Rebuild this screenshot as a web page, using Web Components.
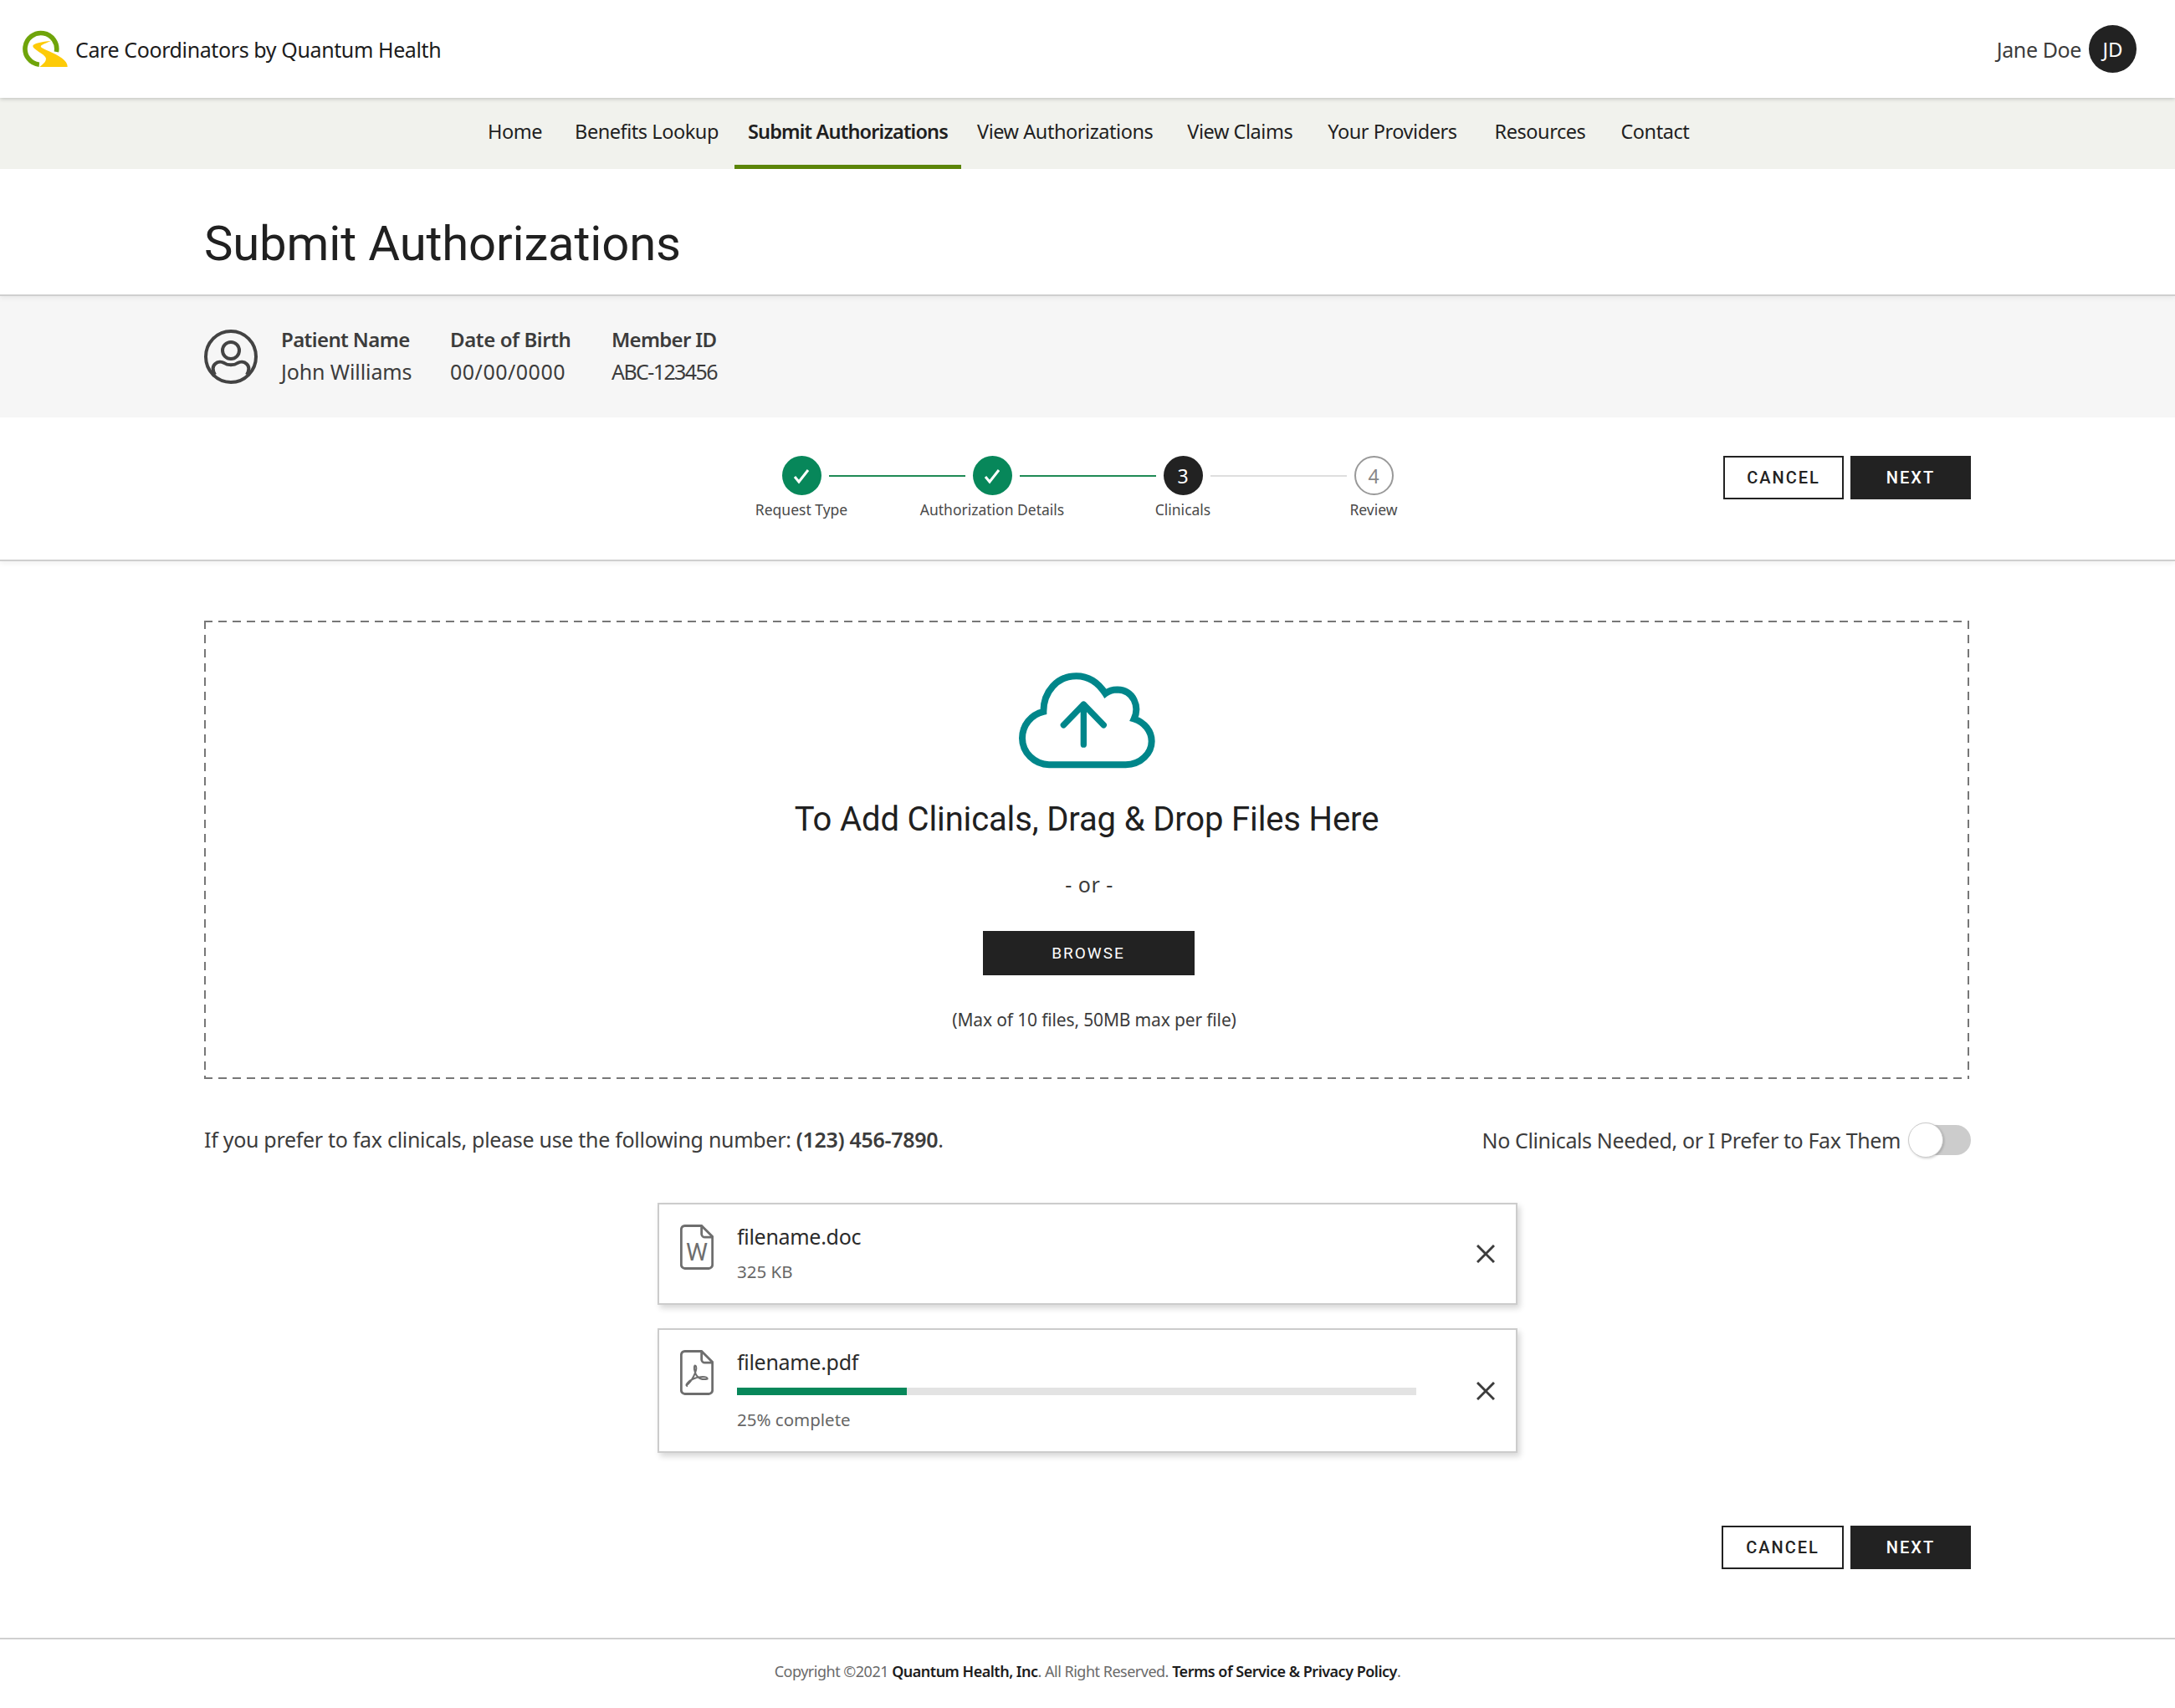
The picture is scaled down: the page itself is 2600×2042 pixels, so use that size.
<!DOCTYPE html>
<html lang="en">
<head>
<meta charset="utf-8">
<title>Submit Authorizations</title>
<style>
  html, body { margin: 0; background: #fff; }
  body { font-family: "Noto Sans", "Open Sans", sans-serif; color: #222; width: 2600px; }
</style>
</head>
<body>
<app-header></app-header>
<app-nav>
  <nav-item>Home</nav-item>
  <nav-item style="margin-left:7px">Benefits Lookup</nav-item>
  <nav-item style="margin-left:3px" active>Submit Authorizations</nav-item>
  <nav-item style="margin-left:3px">View Authorizations</nav-item>
  <nav-item style="margin-left:9px">View Claims</nav-item>
  <nav-item style="margin-left:10px">Your Providers</nav-item>
  <nav-item style="margin-left:13px">Resources</nav-item>
  <nav-item style="margin-left:10px">Contact</nav-item>
</app-nav>
<page-title>Submit Authorizations</page-title>
<patient-band></patient-band>
<step-bar></step-bar>
<main-area>
  <drop-zone></drop-zone>
  <fax-row></fax-row>
  <file-card name="filename.doc" note="325 KB" kind="doc"></file-card>
  <file-card name="filename.pdf" note="25% complete" kind="pdf" progress="25"></file-card>
  <form-actions class="bottom" wide></form-actions>
</main-area>
<app-footer></app-footer>

<script>
// Fuente del cuerpo: la del diseño no está instalada, se ajusta con letter-spacing
const BODY_FONT = '"Noto Sans", "Open Sans", sans-serif';

// Clase base: monta el template en el shadow root
class ShadowElement extends HTMLElement {
  constructor() {
    super();
    this.attachShadow({ mode: "open" });
  }

  connectedCallback() {
    this.shadowRoot.innerHTML = this.render();
  }
}

class AppHeader extends ShadowElement {
  render() {
    return `
    <style>
      :host { display: flex; align-items: center; height: 117px; padding: 0 46px 0 25px; background: #fff;
        position: relative; z-index: 2; box-shadow: 0 1px 5px rgba(0,0,0,.22); font-family: ${BODY_FONT}; }
      .brand { margin-left: 7px; font-size: 25px; letter-spacing: -.39px; color: #1c1c1c; }
      .user { margin-left: auto; font-size: 25px; letter-spacing: -.4px; color: #3c3c3c; }
      .avatar { width: 57px; height: 57px; margin-left: 9px; border-radius: 50%; background: #222; color: #fff;
        display: flex; align-items: center; justify-content: center; font-size: 24px; }
    </style>
    <svg width="58" height="45" viewBox="75 80 175 135">
      <path d="M203 158A57 57 0 1 0 141 204" fill="none" stroke="#6fa40a" stroke-width="17"/>
      <path d="M185 118C150 122 118 128 118 137C118 150 160 165 165 180C168 195 150 205 143 212L243 212C245 190 210 170 175 155C155 147 140 140 150 134C160 128 175 122 185 118Z" fill="#fdcb08"/>
    </svg>
    <span class="brand">Care Coordinators by Quantum Health</span>
    <span class="user">Jane Doe</span>
    <span class="avatar">JD</span>`;
  }
}

class AppNav extends ShadowElement {
  render() {
    return `
    <style>
      :host { display: flex; height: 85px; padding-left: 567px; background: #f1f2ed; font-family: ${BODY_FONT}; }
    </style>
    <slot></slot>`;
  }
}

class NavItem extends ShadowElement {
  render() {
    return `
    <style>
      :host { display: flex; align-items: center; box-sizing: border-box; height: 85px; padding: 0 16px 5px;
        font-size: 23.5px; letter-spacing: -.45px; color: #1f1f1f; white-space: nowrap; }
      :host([active]) { font-weight: 600; letter-spacing: -.83px; border-bottom: 5px solid #5b8507; padding-bottom: 0; }
    </style>
    <slot></slot>`;
  }
}

class PageTitle extends ShadowElement {
  render() {
    return `
    <style>
      :host { display: block; box-sizing: border-box; height: 152px; padding: 54px 0 0 244px; background: #fff;
        border-bottom: 2px solid #cfcfcf; box-shadow: 0 3px 6px rgba(0,0,0,.05); position: relative;
        font: 400 58px/70px Roboto, sans-serif; letter-spacing: -.15px; color: #202020; }
    </style>
    <slot></slot>`;
  }
}

class PatientBand extends ShadowElement {
  render() {
    return `
    <style>
      :host { display: grid; grid-template-columns: 92px 202px 193px auto; justify-content: start; box-sizing: border-box;
        height: 145px; padding: 34px 0 0 244px; background: #f6f6f6; font-family: ${BODY_FONT}; font-size: 25px; line-height: 36px; color: #3c3c3c; }
      svg { margin-top: 6px; }
      b { display: block; font-size: 24px; font-weight: 600; margin-bottom: 2px; }
    </style>
    <svg width="64" height="65" viewBox="0 0 64 65" fill="none" stroke="#434343" stroke-width="4">
      <ellipse cx="32" cy="32.5" rx="30" ry="30.5"/>
      <circle cx="32" cy="25" r="10"/>
      <path d="M13 54C6 42 17 36 24 40C28 43 36 43 40 40C47 36 58 42 51 54"/>
    </svg>
    <div><b style="letter-spacing:-.6px">Patient Name</b><span style="letter-spacing:-.1px">John Williams</span></div>
    <div><b style="letter-spacing:-.4px">Date of Birth</b><span style="letter-spacing:.5px">00/00/0000</span></div>
    <div><b style="letter-spacing:-.7px">Member ID</b><span style="letter-spacing:-1.6px">ABC-123456</span></div>`;
  }
}

class StepBar extends ShadowElement {
  render() {
    return `
    <style>
      :host { display: flex; box-sizing: border-box; height: 172px; padding: 46px 244px 0 844px; background: #fff;
        border-bottom: 2px solid #cfcfcf; box-shadow: 0 3px 6px rgba(0,0,0,.05); position: relative; }
      .steps { display: grid; grid-template-columns: repeat(4, 228px); }
      form-actions { margin-left: auto; }
    </style>
    <div class="steps">
      <step-item state="done" right="on">Request Type</step-item>
      <step-item state="done" left="on" right="on">Authorization Details</step-item>
      <step-item state="current" value="3" left="on" right="off">Clinicals</step-item>
      <step-item state="todo" value="4" left="off">Review</step-item>
    </div>
    <form-actions></form-actions>`;
  }
}

class StepItem extends ShadowElement {
  render() {
    const state = this.getAttribute("state");
    const mark = state === "done"
      ? `<svg width="24" height="24" viewBox="0 0 24 24" fill="none" stroke="#fff" stroke-width="3"><path d="M4 13l5 6L20 5"/></svg>`
      : this.getAttribute("value");
    const line = (side) => {
      const value = this.getAttribute(side);
      return value ? `<i class="${side} ${value}"></i>` : "<span></span>";
    };
    return `
    <style>
      :host { display: block; font-family: ${BODY_FONT}; }
      .track { display: grid; grid-template-columns: 1fr 47px 1fr; align-items: center; height: 47px; }
      i { display: block; height: 2px; }
      i.left { margin-right: 9px; } i.right { margin-left: 9px; }
      i.on { background: #1f8a55; } i.off { background: #dedede; }
      .dot { box-sizing: border-box; width: 47px; height: 47px; border-radius: 50%; display: flex; align-items: center; justify-content: center; font-size: 23px; }
      .done { background: #07875a; }
      .current { background: #222; color: #fff; }
      .todo { border: 2px solid #999; color: #888; background: #fff; }
      .label { margin-top: 5px; text-align: center; font-size: 17.5px; line-height: 24px; color: #4a4a4a; }
    </style>
    <div class="track">${line("left")}<div class="dot ${state}">${mark}</div>${line("right")}</div>
    <div class="label"><slot></slot></div>`;
  }
}

class QhButton extends ShadowElement {
  render() {
    return `
    <style>
      :host { display: flex; align-items: center; justify-content: center; box-sizing: border-box; width: 144px; height: 52px;
        border: 2px solid #222; background: #222; color: #fff; font: 500 20px Roboto, sans-serif; letter-spacing: 2px; }
      :host([outline]) { background: #fff; color: #222; }
    </style>
    <slot></slot>`;
  }
}

class FormActions extends ShadowElement {
  render() {
    const width = this.hasAttribute("wide") ? ' style="width:146px"' : "";
    return `
    <style>
      :host { display: flex; justify-content: flex-end; gap: 8px; }
    </style>
    <qh-button outline${width}>CANCEL</qh-button>
    <qh-button>NEXT</qh-button>`;
  }
}

class MainArea extends ShadowElement {
  render() {
    return `
    <style>
      :host { display: block; padding: 71px 244px 0; font-family: ${BODY_FONT}; }
      ::slotted(form-actions) { margin-top: 87px; }
    </style>
    <slot></slot>`;
  }
}

class DropZone extends ShadowElement {
  render() {
    return `
    <style>
      :host { display: flex; flex-direction: column; align-items: center; box-sizing: border-box; width: 2110px; height: 548px;
        padding-top: 58px; color: #222;
        background:
          repeating-linear-gradient(90deg, #777 0 10px, transparent 10px 17px) top / 100% 2px no-repeat,
          repeating-linear-gradient(90deg, #777 0 10px, transparent 10px 17px) bottom / 100% 2px no-repeat,
          repeating-linear-gradient(180deg, #777 0 10px, transparent 10px 17px) left / 2px 100% no-repeat,
          repeating-linear-gradient(180deg, #777 0 10px, transparent 10px 17px) right / 2px 100% no-repeat; }
      h2 { margin: 33px 0 0; font: 400 40px/50px Roboto, sans-serif; letter-spacing: -.14px; color: #202020; }
      .or { margin-top: 36px; margin-left: 6px; font-size: 25px; letter-spacing: .5px; line-height: 32px; color: #3c3c3c; }
      qh-button { margin: 40px 0 0 4px; width: 253px; height: 53px; font-size: 19px; font-weight: 400; }
      .limit { margin-top: 38px; margin-left: 18px; font-size: 21px; letter-spacing: -.15px; line-height: 30px; color: #3c3c3c; }
    </style>
    <svg width="170" height="122" viewBox="340 60 510 365" fill="none" stroke="#00868a">
      <path stroke-width="24" d="M440 212C395 222 364 262 364 307C364 358 408 402 460 402L735 402C790 402 828 360 828 318C828 282 802 250 765 238C785 195 765 135 705 133C690 133 675 137 662 147C635 105 600 84 558 84C490 84 440 140 440 212Z"/>
      <path stroke-width="22" stroke-linecap="round" stroke-linejoin="round" d="M584 330V186M512 260L584 186L656 260"/>
    </svg>
    <h2>To Add Clinicals, Drag &amp; Drop Files Here</h2>
    <div class="or">- or -</div>
    <qh-button>BROWSE</qh-button>
    <div class="limit">(Max of 10 files, 50MB max per file)</div>`;
  }
}

class FaxRow extends ShadowElement {
  render() {
    return `
    <style>
      :host { display: flex; align-items: center; height: 50px; margin: 48px 0 50px; font-size: 25px; color: #3c3c3c; }
      b { font-weight: 600; }
      .note { letter-spacing: -.3px; margin-bottom: 2px; }
      toggle-switch { margin-left: auto; letter-spacing: -.38px; }
    </style>
    <span class="note">If you prefer to fax clinicals, please use the following number: <b>(123) 456-7890</b>.</span>
    <toggle-switch>No Clinicals Needed, or I Prefer to Fax Them</toggle-switch>`;
  }
}

class ToggleSwitch extends ShadowElement {
  render() {
    return `
    <style>
      :host { display: flex; align-items: center; }
      .track { display: flex; align-items: center; width: 74px; height: 36px; margin-left: 10px; border-radius: 18px; background: #ccc; }
      .knob { box-sizing: border-box; width: 42px; height: 42px; margin-left: -1px; border-radius: 50%; background: #fff; border: 1px solid #ccc; box-shadow: 1px 1px 3px rgba(0,0,0,.2); }
    </style>
    <slot></slot>
    <div class="track"><div class="knob"></div></div>`;
  }
}

class FileCard extends ShadowElement {
  render() {
    const progress = this.getAttribute("progress");
    const bar = progress
      ? `<div class="bar"><div class="fill" style="width:${progress}%"></div></div>`
      : "";
    const badge = this.getAttribute("kind") === "doc"
      ? `<text x="188" y="266" text-anchor="middle" font-family="Roboto, sans-serif" font-size="88" fill="#6e6e6e" stroke="none">W</text>`
      : `<path stroke-width="6" d="M152 262C170 250 190 210 185 195C180 185 175 200 182 218C190 240 210 245 226 240C228 230 195 230 175 240C160 247 145 262 152 265Z"/>`;
    return `
    <style>
      :host { display: flex; box-sizing: border-box; width: 1028px; margin: 0 auto 28px; padding: 24px 25px 0; border: 2px solid #ccc;
        background: #fff; box-shadow: 3px 4px 7px rgba(0,0,0,.16); min-height: 122px; }
      :host([progress]) { height: 149px; margin-bottom: 0; }
      .info { display: flex; flex-direction: column; margin: -3px 0 0 28px; }
      .name { font-size: 25px; letter-spacing: -.3px; line-height: 34px; color: #2b2b2b; }
      .note { margin-top: 11px; font-size: 20.5px; line-height: 28px; color: #666; }
      .bar { width: 812px; height: 9px; margin-top: 14px; background: #e3e3e3; }
      .fill { height: 100%; background: #07875a; }
      .bar + .note { margin-top: 15px; }
      .close { align-self: center; margin: -24px 0 0 auto; }
    </style>
    <svg width="40" height="54" viewBox="128 137 120 161" fill="none" stroke="#6e6e6e" stroke-width="8.5">
      <path d="M205 141H145A14 14 0 0 0 132 154V280A14 14 0 0 0 145 294H231A14 14 0 0 0 244 280V180Z"/>
      <path d="M205 141V170A12 12 0 0 0 217 182H244"/>
      ${badge}
    </svg>
    <div class="info">
      <div class="name">${this.getAttribute("name")}</div>
      ${bar}
      <div class="note">${this.getAttribute("note")}</div>
    </div>
    <svg class="close" width="22" height="22" viewBox="0 0 22 22" stroke="#3c3c3c" stroke-width="3"><path d="M1 1L21 21M21 1L1 21"/></svg>`;
  }
}

class AppFooter extends ShadowElement {
  render() {
    return `
    <style>
      :host { display: block; box-sizing: border-box; height: 84px; margin-top: 82px; padding-top: 23px; border-top: 2px solid #cfcfcf;
        text-align: center; font-family: ${BODY_FONT}; font-size: 18px; letter-spacing: -.5px; line-height: 30px; color: #6a6a6a; }
      b { font-weight: 600; color: #1c1c1c; }
    </style>
    Copyright ©2021 <b>Quantum Health, Inc</b>. All Right Reserved. <b>Terms of Service &amp; Privacy Policy</b>.`;
  }
}

customElements.define("app-header", AppHeader);
customElements.define("app-nav", AppNav);
customElements.define("nav-item", NavItem);
customElements.define("page-title", PageTitle);
customElements.define("patient-band", PatientBand);
customElements.define("step-bar", StepBar);
customElements.define("step-item", StepItem);
customElements.define("qh-button", QhButton);
customElements.define("form-actions", FormActions);
customElements.define("main-area", MainArea);
customElements.define("drop-zone", DropZone);
customElements.define("fax-row", FaxRow);
customElements.define("toggle-switch", ToggleSwitch);
customElements.define("file-card", FileCard);
customElements.define("app-footer", AppFooter);
</script>
</body>
</html>
